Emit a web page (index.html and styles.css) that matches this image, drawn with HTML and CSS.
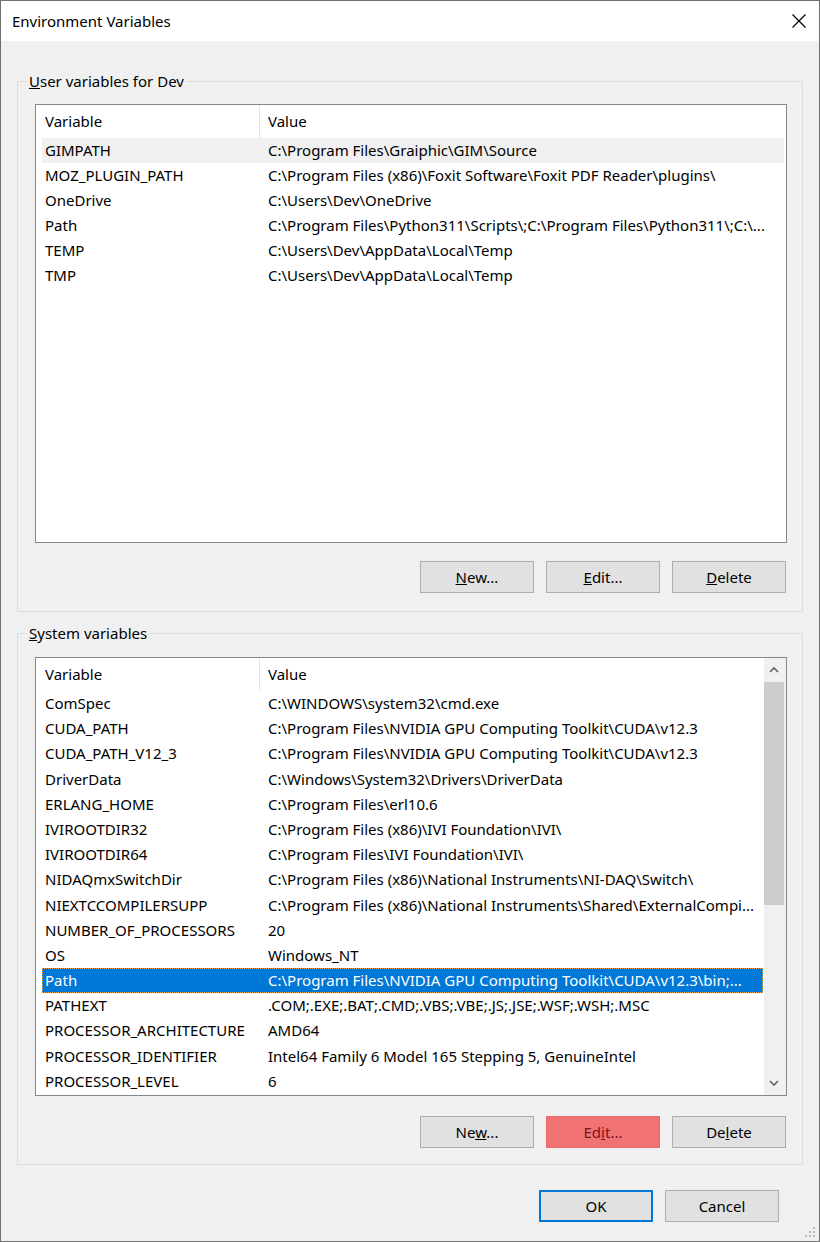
FILE: index.html
```html
<!DOCTYPE html>
<html lang="en">
    <head>
        <title>Environment Variables</title>
        <meta charset="UTF-8">
        <link rel="stylesheet" href="styles.css">
    </head>

    <body>
        <div class="window">
            <div class="titlebar">
                <span class="title">Environment Variables</span>
                <svg class="close" width="14" height="14" viewBox="0 0 14 14">
                    <path d="M0.5 0.5 L13.5 13.5 M13.5 0.5 L0.5 13.5" stroke="#000" stroke-width="1.2" fill="none"/>
                </svg>
            </div>

            <fieldset class="group">
                <legend><u>U</u>ser variables for Dev</legend>
                <div class="list">
                    <div class="list-body">
                        <div class="list-head"><span>Variable</span><span>Value</span></div>
                        <div class="row hover"><span>GIMPATH</span><span>C:\Program Files\Graiphic\GIM\Source</span></div>
                        <div class="row"><span>MOZ_PLUGIN_PATH</span><span>C:\Program Files (x86)\Foxit Software\Foxit PDF Reader\plugins\</span></div>
                        <div class="row"><span>OneDrive</span><span>C:\Users\Dev\OneDrive</span></div>
                        <div class="row"><span>Path</span><span>C:\Program Files\Python311\Scripts\;C:\Program Files\Python311\;C:\...</span></div>
                        <div class="row"><span>TEMP</span><span>C:\Users\Dev\AppData\Local\Temp</span></div>
                        <div class="row"><span>TMP</span><span>C:\Users\Dev\AppData\Local\Temp</span></div>
                    </div>
                </div>
                <div class="buttons">
                    <button class="btn"><u>N</u>ew...</button>
                    <button class="btn"><u>E</u>dit...</button>
                    <button class="btn"><u>D</u>elete</button>
                </div>
            </fieldset>

            <fieldset class="group second">
                <legend><u>S</u>ystem variables</legend>
                <div class="list">
                    <div class="list-body">
                        <div class="list-head"><span>Variable</span><span>Value</span></div>
                        <div class="row"><span>ComSpec</span><span>C:\WINDOWS\system32\cmd.exe</span></div>
                        <div class="row"><span>CUDA_PATH</span><span>C:\Program Files\NVIDIA GPU Computing Toolkit\CUDA\v12.3</span></div>
                        <div class="row"><span>CUDA_PATH_V12_3</span><span>C:\Program Files\NVIDIA GPU Computing Toolkit\CUDA\v12.3</span></div>
                        <div class="row"><span>DriverData</span><span>C:\Windows\System32\Drivers\DriverData</span></div>
                        <div class="row"><span>ERLANG_HOME</span><span>C:\Program Files\erl10.6</span></div>
                        <div class="row"><span>IVIROOTDIR32</span><span>C:\Program Files (x86)\IVI Foundation\IVI\</span></div>
                        <div class="row"><span>IVIROOTDIR64</span><span>C:\Program Files\IVI Foundation\IVI\</span></div>
                        <div class="row"><span>NIDAQmxSwitchDir</span><span>C:\Program Files (x86)\National Instruments\NI-DAQ\Switch\</span></div>
                        <div class="row"><span>NIEXTCCOMPILERSUPP</span><span>C:\Program Files (x86)\National Instruments\Shared\ExternalCompi...</span></div>
                        <div class="row"><span>NUMBER_OF_PROCESSORS</span><span>20</span></div>
                        <div class="row"><span>OS</span><span>Windows_NT</span></div>
                        <div class="row selected"><span>Path</span><span>C:\Program Files\NVIDIA GPU Computing Toolkit\CUDA\v12.3\bin;...</span></div>
                        <div class="row"><span>PATHEXT</span><span>.COM;.EXE;.BAT;.CMD;.VBS;.VBE;.JS;.JSE;.WSF;.WSH;.MSC</span></div>
                        <div class="row"><span>PROCESSOR_ARCHITECTURE</span><span>AMD64</span></div>
                        <div class="row"><span>PROCESSOR_IDENTIFIER</span><span>Intel64 Family 6 Model 165 Stepping 5, GenuineIntel</span></div>
                        <div class="row"><span>PROCESSOR_LEVEL</span><span>6</span></div>
                    </div>
                    <div class="scrollbar">
                        <div class="arrow">
                            <svg width="10" height="6" viewBox="0 0 10 6"><path d="M1 5 L5 1 L9 5" stroke="#606060" stroke-width="1.6" fill="none"/></svg>
                        </div>
                        <div class="thumb"></div>
                        <div class="track"></div>
                        <div class="arrow">
                            <svg width="10" height="6" viewBox="0 0 10 6"><path d="M1 1 L5 5 L9 1" stroke="#606060" stroke-width="1.6" fill="none"/></svg>
                        </div>
                    </div>
                </div>
                <div class="buttons">
                    <button class="btn">Ne<u>w</u>...</button>
                    <button class="btn flagged">Ed<u>i</u>t...</button>
                    <button class="btn">De<u>l</u>ete</button>
                </div>
            </fieldset>

            <div class="footer">
                <button class="btn default">OK</button>
                <button class="btn">Cancel</button>
            </div>

            <svg class="grip" width="11" height="11" viewBox="0 0 11 11">
                <rect x="8" y="0" width="2" height="2" fill="#b8b8b8"/>
                <rect x="4" y="4" width="2" height="2" fill="#b8b8b8"/>
                <rect x="8" y="4" width="2" height="2" fill="#b8b8b8"/>
                <rect x="0" y="8" width="2" height="2" fill="#b8b8b8"/>
                <rect x="4" y="8" width="2" height="2" fill="#b8b8b8"/>
                <rect x="8" y="8" width="2" height="2" fill="#b8b8b8"/>
            </svg>
        </div>
    </body>
</html>
```

FILE: styles.css
```css
* {
    box-sizing: border-box;
}
body {
    margin: 0;
    background-color: #f0f0f0;
    font-family: "Noto Sans", "Open Sans", sans-serif;
    font-size: 15px;
    color: #000;
}
.window {
    position: relative;
    width: 820px;
    height: 1242px;
    border: 1px solid #6f6f6f;
    background-color: #f0f0f0;
    display: flex;
    flex-direction: column;
}
.titlebar {
    height: 40px;
    background-color: #fff;
    display: flex;
    align-items: center;
    justify-content: space-between;
    padding-left: 11px;
    padding-right: 13px;
}
.close {
    display: block;
}

/* group boxes */
.group {
    margin: 30px 16px 0 16px;
    padding: 13px 15px 18px 17px;
    border: 1px solid #dcdcdc;
    min-width: 0;
}
.group.second {
    margin-top: 11px;
    padding-top: 14px;
    padding-bottom: 16px;
}
legend {
    margin-left: -8px;
    padding: 0 2px;
    line-height: 20px;
}

/* list view */
.list {
    height: 439px;
    border: 1px solid #828790;
    background-color: #fff;
    display: flex;
}
.list-body {
    flex: 1;
    min-width: 0;
    overflow: hidden;
}
.list-head {
    display: grid;
    grid-template-columns: 224px 1fr;
    height: 33px;
    line-height: 32px;
}
.list-head span {
    padding-left: 9px;
}
.list-head span:first-child {
    border-right: 1px solid #e5e5e5;
}
.list-head span:last-child {
    padding-left: 8px;
}
.row {
    display: grid;
    grid-template-columns: 223px 1fr;
    height: 25px;
    line-height: 25px;
    margin: 0 2px 0 6px;
}
.second .row {
    height: 25.2px;
}
.row span {
    padding-left: 3px;
    white-space: nowrap;
    overflow: hidden;
}
.row.hover {
    background-color: #f0f0f0;
}
.row.selected {
    background-color: #0078d7;
    color: #fff;
    outline: 1px dotted #f4a24a;
    outline-offset: -1px;
    margin-right: 1px;
}

.scrollbar {
    width: 22px;
    background-color: #f0f0f0;
    display: flex;
    flex-direction: column;
    padding-right: 2px;
}
.arrow {
    height: 24px;
    display: flex;
    align-items: center;
    justify-content: center;
}
.arrow svg {
    display: block;
}
.thumb {
    height: 223px;
    background-color: #cdcdcd;
}
.track {
    flex: 1;
}

/* buttons */
.buttons {
    display: flex;
    justify-content: flex-end;
    gap: 12px;
    margin-top: 18px;
    margin-right: 1px;
}
.second .buttons {
    margin-top: 20px;
}
.btn {
    width: 114px;
    height: 32px;
    border: 1px solid #adadad;
    background-color: #e1e1e1;
    font-family: inherit;
    font-size: 15px;
    color: #000;
    padding: 0;
}
.btn.flagged {
    background-color: #f07272;
    border-color: #e96a6a;
    color: #7a1616;
}
.btn.default {
    border: 2px solid #0078d7;
}
.footer {
    display: flex;
    justify-content: flex-end;
    gap: 12px;
    margin-top: 25px;
    padding-right: 40px;
}
.grip {
    position: absolute;
    right: 3px;
    bottom: 3px;
}
```
